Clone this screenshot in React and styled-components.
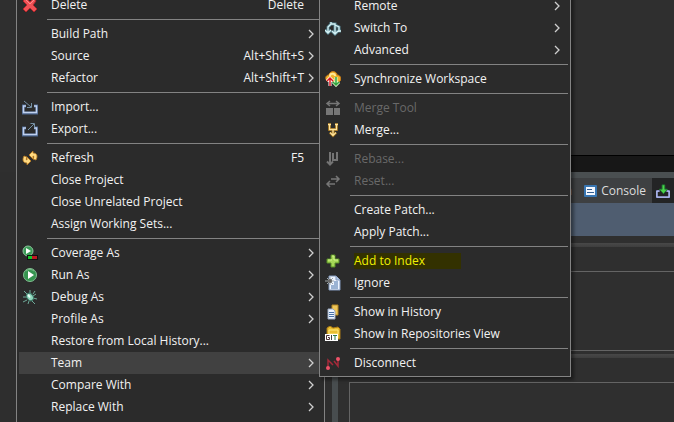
import React from "react";
import styled, { createGlobalStyle, css } from "styled-components";

const GlobalStyle = createGlobalStyle`
  * { box-sizing: border-box; }
  body { margin: 0; background: #2f2f2f; overflow: hidden; }
  body, button { font-family: "Open Sans", "Noto Sans CJK KR", sans-serif; font-size: 12px; }
  button { border: 0; background: none; color: inherit; text-align: left; }
`;

const Workbench = styled.main`
  position: relative;
  display: flex;
  flex-direction: column;
  height: 100vh;
  overflow: hidden;
  background: #2f2f2f;
  color: #f2f2f2;
`;

const Editor = styled.section`
  height: 155px;
  flex: none;
`;

const Trim = styled.div`
  height: 17px;
  flex: none;
  margin-left: 332px;
  background: #171717;
  border-top: 1px solid #000;
`;

const Lower = styled.div`
  flex: 1;
  display: grid;
  grid-template-columns: 332px 6px 1fr;
`;

const Explorer = styled.aside`
  background: #2e2e2e;
`;

const Sash = styled.div`
  background: #484d4f;
`;

const ViewStack = styled.section`
  display: flex;
  flex-direction: column;
  border-top: 6px solid #4a4f51;
`;

const TabBar = styled.div`
  display: flex;
  justify-content: flex-end;
  height: 25px;
  background: #3e4042;
`;

const Tab = styled.button`
  display: flex;
  align-items: center;
  gap: 4px;
  padding: 0 6px;
  color: ${(p) => (p.$muted ? "#9a9a9a" : "#dcdcdc")};
`;

const TabAction = styled.button`
  width: 22px;
  padding: 0 4px;
  display: flex;
  align-items: center;
  background: #232425;
`;

const ViewToolbar = styled.div`
  height: 33px;
  background: #4f5d70;
`;

const Groove = styled.div`
  margin-top: ${(p) => p.$gap}px;
  height: 4px;
  background: linear-gradient(#484848, #3e3e3e);
`;

const Pane = styled.div`
  height: 80px;
  margin: 24px 0 0 11px;
  border: 1px solid #646464;
  border-right: 0;
`;

const Menu = styled.div`
  position: absolute;
  top: ${(p) => p.$top}px;
  left: ${(p) => p.$left}px;
  width: ${(p) => p.$width}px;
  padding: 2px;
  background: #2b2b2b;
  border: 1px solid #838383;
  ${(p) => p.$shadow && css`box-shadow: 3px 3px 3px rgba(0, 0, 0, 0.4);`}
  ${(p) => p.$tall && css`bottom: -24px;`}
`;

const Item = styled.button`
  display: flex;
  align-items: center;
  width: 100%;
  height: 22px;
  padding: 0 8px 0 3px;
  color: #f2f2f2;
  background: ${(p) => (p.$active ? "#414141" : "transparent")};
  &:disabled { color: #696969; }
`;

const IconSlot = styled.span`
  display: flex;
  flex: none;
  width: 16px;
  height: 16px;
  margin-right: 13px;
`;

const Label = styled.span`
  flex: 1;
  line-height: 16px;
  white-space: nowrap;
`;

const Marked = styled.mark`
  display: inline-block;
  width: 107px;
  background: #333100;
  color: #f0f000;
`;

const Accelerator = styled.span`
  line-height: 16px;
  margin-right: 4px;
`;

const ArrowSlot = styled.span`
  display: flex;
  width: 6px;
`;

const Separator = styled.hr`
  height: 1px;
  margin: 3px 0 3px 28px;
  border: 0;
  background: #838383;
`;

const Svg = ({ children, w = 16, h = 16 }) => (
  <svg width={w} height={h} viewBox={`0 0 ${w} ${h}`} fill="none" aria-hidden="true">{children}</svg>
);

const icons = {
  delete: (
    <Svg>
      <path d="M4 1 8 5l4-4 2 3-3 4 4 4-3 3-4-4-4 4-3-3 4-4-4-4z" fill="#ef5256" stroke="#b3262b" />
      <path d="m4 3 4 4 4-4" stroke="#ff8c8c" />
    </Svg>
  ),
  import: (
    <Svg>
      <path d="M4 7H1v7h14V7h-3" stroke="#4d678f" strokeWidth="3" />
      <path d="M4 7H1.500v6.500h13V7H12" stroke="#bfd0ee" strokeWidth="1.500" />
      <path d="m2 2 7 6M9.500 4v4.500H5" stroke="#7590a5" />
    </Svg>
  ),
  export: (
    <Svg>
      <path d="M4 7H1v7h14V7h-3" stroke="#4d678f" strokeWidth="3" />
      <path d="M4 7H1.500v6.500h13V7H12" stroke="#bfd0ee" strokeWidth="1.500" />
      <path d="m6 9 6-6M8.500 2.500h4v4" stroke="#7590a5" />
    </Svg>
  ),
  refresh: (
    <Svg>
      <path d="M7 5l4-4v2c4 0 5 3 3 7l-3-1c1-2 1-3 0-3v3z" fill="#ffd980" stroke="#b77a20" strokeWidth=".8" />
      <path d="M9 11l-4 4v-2c-4 0-5-3-3-7l3 1c-1 2-1 3 0 3V7z" fill="#ffd980" stroke="#b77a20" strokeWidth=".8" />
    </Svg>
  ),
  coverage: (
    <Svg>
      <circle cx="6" cy="6" r="5" fill="#3b9a57" stroke="#8ac49a" />
      <path d="m4 3 5 3-5 3z" fill="#fff" />
      <path d="M5 10h11v5H5z" fill="#111" />
      <path d="M6 11h4v3H6z" fill="#13c52c" />
      <path d="M10 11h5v3h-5z" fill="#c01822" />
    </Svg>
  ),
  run: (
    <Svg>
      <circle cx="8" cy="8" r="6.500" fill="#35944f" stroke="#82bd91" />
      <path d="M4 4a6 6 0 0 1 8 0" stroke="#78bd88" />
      <path d="m6 4 6 4-6 4z" fill="#fff" />
    </Svg>
  ),
  debug: (
    <Svg>
      <path d="M5 5 2 2M8 4V1m3 4 2-3M5 8H1m4 3-4 2m6-1-1 3m4-3 3 3m-2-6 4 1m-4-3 3-2" stroke="#6fa999" />
      <ellipse cx="8" cy="8" rx="3" ry="4" transform="rotate(-35 8 8)" fill="#8ed7bd" stroke="#417d6b" />
      <ellipse cx="7" cy="7" rx="1" ry="2" transform="rotate(-35 7 7)" fill="#edfff6" />
    </Svg>
  ),
  switch: (
    <Svg>
      <path d="M6 2v2h4v9M6 4 3 7v5M10 5l4 2v5M0 10l3 3 3-3m1 1 3 3 3-3M13 11h3" stroke="#55808c" strokeWidth="3" />
      <path d="M6 2v2h4v9M6 4 3 7v5M10 5l4 2v5M0 10l3 3 3-3m1 1 3 3 3-3M13 11h3" stroke="#d4f1f4" strokeWidth="1.300" />
    </Svg>
  ),
  sync: (
    <Svg>
      <path d="M2 10C-1 6 2 4 4 4c1-5 8-4 8 0 4 0 5 5 2 7z" fill="#f0b329" stroke="#ce7d17" />
      <path d="M5 5c0-3 5-3 5 0" stroke="#ffe995" strokeWidth="2" />
      <path d="M5 15V8M2 10l3-3 3 3" stroke="#fff" strokeWidth="3" />
      <path d="M5 15V8M2 10l3-3 3 3" stroke="#d91822" strokeWidth="1.500" />
      <path d="M11 6v8m-3-3 3 3 3-3" stroke="#e8ffd3" strokeWidth="3" />
      <path d="M11 6v8m-3-3 3 3 3-3" stroke="#31a43f" strokeWidth="1.500" />
    </Svg>
  ),
  mergeTool: (
    <Svg>
      <path d="M2 3.500h12M5 1 2 3.500 5 6m6-5 3 2.500L11 6" stroke="#777" strokeWidth="1.500" />
      <path d="M1 8h7v7H1zm8 0h6v7H9z" fill="#777" />
    </Svg>
  ),
  merge: (
    <Svg>
      <path d="M4.500 3v4.500h7V3M8 7v6M5 10.500l3 3 3-3M3 2.500h3m4 0h3" stroke="#906617" strokeWidth="3" />
      <path d="M4.500 3v4.500h7V3M8 7v6M5 10.500l3 3 3-3M3 2.500h3m4 0h3" stroke="#ffe39b" strokeWidth="1.300" />
    </Svg>
  ),
  rebase: (
    <Svg>
      <path d="M5 1v12M2 10.500l3 3 3-3M12 1v8H8V2" stroke="#747474" strokeWidth="2" />
    </Svg>
  ),
  reset: (
    <Svg>
      <path d="M6 6h8m-3-3 3 3-3 3M10 11H2m3-3-3 3 3 3" stroke="#777" strokeWidth="1.500" />
    </Svg>
  ),
  add: (
    <Svg>
      <path d="M6 2h4v4h4v4h-4v4H6v-4H2V6h4z" fill="#a6d857" stroke="#578d26" />
      <path d="M7 3h2v4h4M3 7h4" stroke="#d2f28c" />
    </Svg>
  ),
  ignore: (
    <Svg>
      <path d="M4 1h7l4 4v10H4z" fill="#edf4ff" stroke="#8198bc" />
      <path d="M11 1v4h4" fill="#b6c9e6" stroke="#8198bc" />
      <path d="M9 7h4M9 9h4M6 11h7M6 13h7" stroke="#4972a8" />
      <path d="M0 6h9M2 3l6 6M8 3 2 9M5 2v8" stroke="#a0a7a8" />
      <circle cx="5" cy="6" r="2" fill="#666" />
    </Svg>
  ),
  history: (
    <Svg>
      <path d="M7 1h6v10H7z" fill="#eec65a" stroke="#b48723" />
      <path d="M3 5h5l2 2v8H3z" fill="#edf4ff" stroke="#9aa9c1" />
      <path d="M4 8.500h5M4 10.500h5M4 12.500h5" stroke="#4972a8" />
    </Svg>
  ),
  repo: (
    <Svg>
      <path d="M2 2 5 0l3 2 5-1 2 2v10H2z" fill="#e8bd31" stroke="#a87816" />
      <path d="M4 4h9v4H4z" stroke="#ffe87c" />
      <rect y="8" width="13" height="7" fill="#fff" />
      <path d="M4.500 9.500h-3v4h3v-2H3" stroke="#4b3034" />
      <path d="M6.500 9v5" stroke="#444" />
      <path d="M8 9.500h4m-2 0V14" stroke="#287848" />
    </Svg>
  ),
  disconnect: (
    <Svg>
      <path d="M3 13V5l5 5m1-4 4 5V3" stroke="#a52a3a" strokeWidth="1.500" />
      <circle cx="3" cy="13" r="2" fill="#ef5268" />
      <circle cx="13" cy="4" r="2" fill="#ef5268" />
    </Svg>
  ),
};

const Arrow = () => (
  <Svg w={6} h={10}><path d="m1 1 4 4-4 4" stroke="#cfcfcf" strokeWidth="1.300" /></Svg>
);

const mainItems = [
  { label: "Delete", icon: "delete", keys: "Delete" },
  null,
  { label: "Build Path", sub: true },
  { label: "Source", keys: "Alt+Shift+S", sub: true },
  { label: "Refactor", keys: "Alt+Shift+T", sub: true },
  null,
  { label: "Import...", icon: "import" },
  { label: "Export...", icon: "export" },
  null,
  { label: "Refresh", icon: "refresh", keys: "F5" },
  { label: "Close Project" },
  { label: "Close Unrelated Project" },
  { label: "Assign Working Sets..." },
  null,
  { label: "Coverage As", icon: "coverage", sub: true },
  { label: "Run As", icon: "run", sub: true },
  { label: "Debug As", icon: "debug", sub: true },
  { label: "Profile As", sub: true },
  { label: "Restore from Local History..." },
  { label: "Team", sub: true, active: true },
  { label: "Compare With", sub: true },
  { label: "Replace With", sub: true },
];

const teamItems = [
  { label: "Remote", sub: true },
  { label: "Switch To", icon: "switch", sub: true },
  { label: "Advanced", sub: true },
  null,
  { label: "Synchronize Workspace", icon: "sync" },
  null,
  { label: "Merge Tool", icon: "mergeTool", disabled: true },
  { label: "Merge...", icon: "merge" },
  null,
  { label: "Rebase...", icon: "rebase", disabled: true },
  { label: "Reset...", icon: "reset", disabled: true },
  null,
  { label: "Create Patch..." },
  { label: "Apply Patch..." },
  null,
  { label: "Add to Index", icon: "add", marked: true },
  { label: "Ignore", icon: "ignore" },
  null,
  { label: "Show in History", icon: "history" },
  { label: "Show in Repositories View", icon: "repo" },
  null,
  { label: "Disconnect", icon: "disconnect" },
];

const MenuItems = ({ items }) =>
  items.map((item, i) =>
    item === null ? (
      <Separator key={i} />
    ) : (
      <Item
        key={item.label}
        type="button"
        role="menuitem"
        disabled={item.disabled}
        aria-haspopup={item.sub ? "menu" : undefined}
        $active={item.active}
      >
        <IconSlot>{icons[item.icon]}</IconSlot>
        <Label>{item.marked ? <Marked>{item.label}</Marked> : item.label}</Label>
        {item.keys && <Accelerator>{item.keys}</Accelerator>}
        <ArrowSlot>{item.sub && <Arrow />}</ArrowSlot>
      </Item>
    )
  );

export default function App() {
  return (
    <>
      <GlobalStyle />
      <Workbench>
        <Editor />
        <Trim />
        <Lower>
          <Explorer />
          <Sash />
          <ViewStack>
            <TabBar role="tablist">
              <Tab type="button" role="tab" $muted>Declaration</Tab>
              <Tab type="button" role="tab">
                <Svg w={13} h={12}>
                  <rect width="13" height="12" rx="1" fill="#3976b2" />
                  <path d="M2 2h9v8H2z" fill="#f4f8ff" />
                  <path d="M3 4.500h5M3 7.500h7" stroke="#315d91" />
                </Svg>
                Console
              </Tab>
              <TabAction type="button" aria-label="Git Staging">
                <Svg>
                  <path d="M4 8H1v7h14V8h-3" stroke="#7580c4" strokeWidth="2" />
                  <path d="M4 8H1v7h14V8h-3" stroke="#d0d7ff" />
                  <path d="M7 1h3v5h3l-4.500 5L4 6h3z" fill="#4cd54a" stroke="#218336" />
                </Svg>
              </TabAction>
            </TabBar>
            <ViewToolbar />
            <Groove $gap={7} />
            <Pane />
            <Groove $gap={3} />
            <Pane />
          </ViewStack>
        </Lower>
        <Menu role="menu" aria-label="Project" $top={-9} $left={16} $width={309} $tall>
          <MenuItems items={mainItems} />
        </Menu>
        <Menu role="menu" aria-label="Team" $top={-8} $left={319} $width={252} $shadow>
          <MenuItems items={teamItems} />
        </Menu>
      </Workbench>
    </>
  );
}
